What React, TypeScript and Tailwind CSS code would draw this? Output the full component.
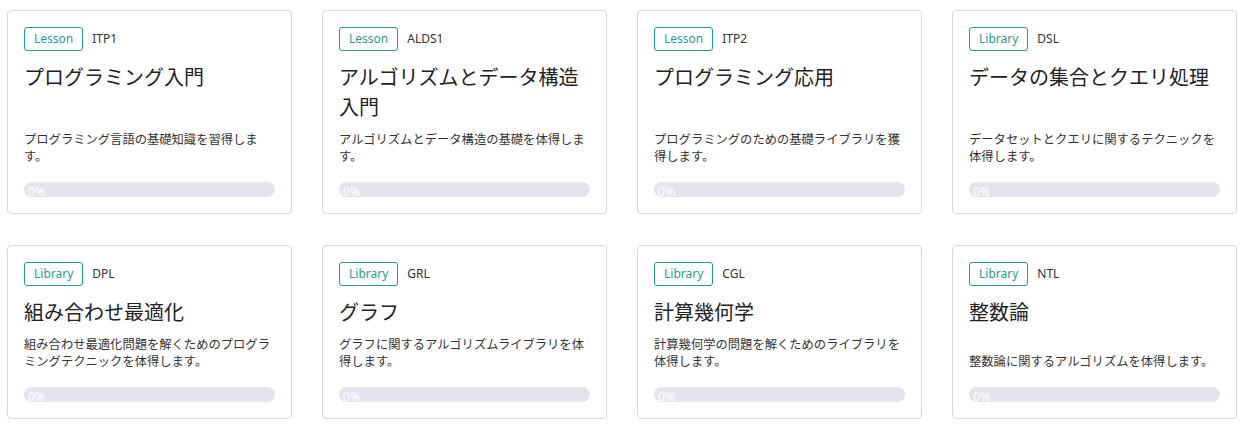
import React from 'react';

type Course = {
  kind: 'Lesson' | 'Library';
  code: string;
  title: string;
  description: string;
  progress: number;
};

const courses: Course[] = [
  { kind: 'Lesson', code: 'ITP1', title: 'プログラミング入門', description: 'プログラミング言語の基礎知識を習得します。', progress: 0 },
  { kind: 'Lesson', code: 'ALDS1', title: 'アルゴリズムとデータ構造入門', description: 'アルゴリズムとデータ構造の基礎を体得します。', progress: 0 },
  { kind: 'Lesson', code: 'ITP2', title: 'プログラミング応用', description: 'プログラミングのための基礎ライブラリを獲得します。', progress: 0 },
  { kind: 'Library', code: 'DSL', title: 'データの集合とクエリ処理', description: 'データセットとクエリに関するテクニックを体得します。', progress: 0 },
  { kind: 'Library', code: 'DPL', title: '組み合わせ最適化', description: '組み合わせ最適化問題を解くためのプログラミングテクニックを体得します。', progress: 0 },
  { kind: 'Library', code: 'GRL', title: 'グラフ', description: 'グラフに関するアルゴリズムライブラリを体得します。', progress: 0 },
  { kind: 'Library', code: 'CGL', title: '計算幾何学', description: '計算幾何学の問題を解くためのライブラリを体得します。', progress: 0 },
  { kind: 'Library', code: 'NTL', title: '整数論', description: '整数論に関するアルゴリズムを体得します。', progress: 0 },
];

const CourseCard = ({ course }: { course: Course }) => (
  <div className="flex flex-col border border-[#d9d9d9] rounded-[4px] bg-white px-4 pt-4 pb-4">
    {/* Header */}
    <div className="flex items-center gap-[9px]">
      <span className="h-[24px] px-[9px] flex items-center border border-[#1f9e8f] rounded-[3px] text-[12px] text-[#1f9e8f]">
        {course.kind}
      </span>
      <span className="text-[12px] text-[#333]">{course.code}</span>
    </div>

    {/* Title */}
    <h2 className="mt-3 mb-2 text-[20px] leading-[30px] font-normal text-[#222]">{course.title}</h2>

    {/* Description */}
    <p className="mt-auto text-[12.3px] leading-[17px] text-[#333]">{course.description}</p>

    {/* Progress */}
    <div className="mt-[17px] h-[15px] rounded-full bg-[#e3e4ee] overflow-hidden relative">
      <div className="h-full bg-[#1f9e8f]" style={{ width: `${course.progress}%` }} />
      <span className="absolute left-[4px] top-[3px] text-[12px] leading-[14px] text-white">{course.progress}%</span>
    </div>
  </div>
);

export default function App() {
  return (
    <div
      className="bg-white min-h-screen pt-[10px] pl-[7px] pr-[8px]"
      style={{ fontFamily: '"Noto Sans", "Noto Sans CJK JP", sans-serif' }}
    >
      <div className="grid grid-cols-4 gap-x-[30px] gap-y-[31px]">
        {courses.map((c) => (
          <CourseCard key={c.code} course={c} />
        ))}
      </div>
    </div>
  );
}
